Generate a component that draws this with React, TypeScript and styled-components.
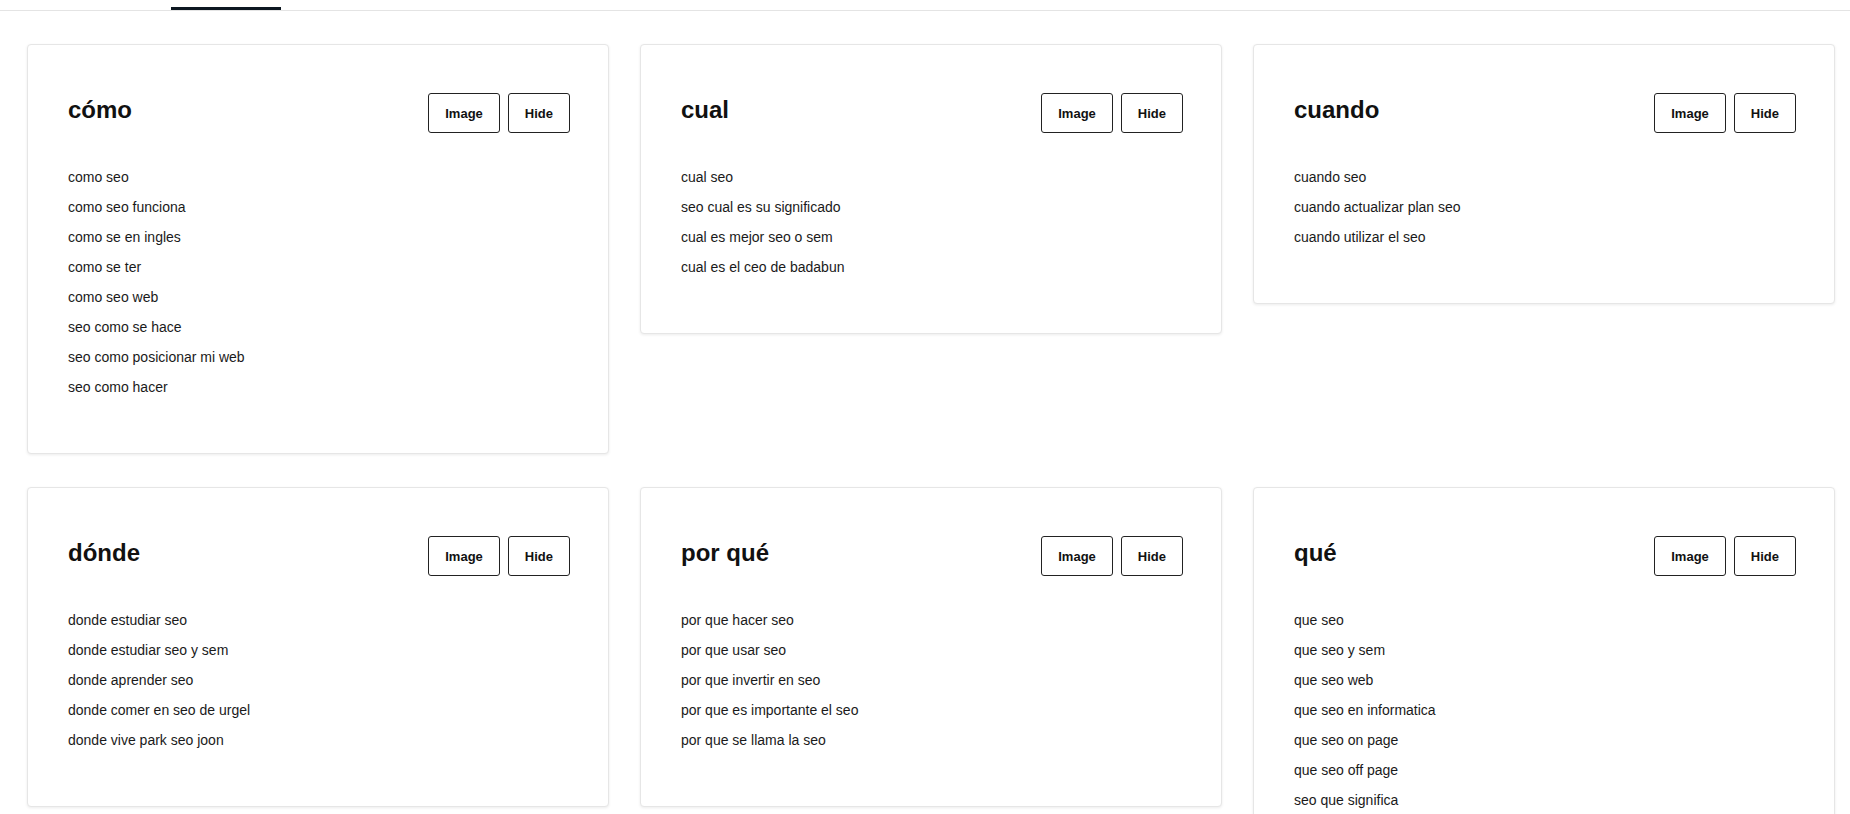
import styled, { createGlobalStyle } from "styled-components";

const GlobalStyle = createGlobalStyle`
  body {
    margin: 0;
    background: #ffffff;
    font-family: "Liberation Sans", Arial, sans-serif;
    color: #1a1a1a;
  }
`;

const Page = styled.main`
  min-height: 100vh;
  background: #ffffff;
`;

const TabBar = styled.nav`
  display: flex;
  height: 10px;
  padding-left: 27px;
  border-bottom: 1px solid #e4e4e4;
`;

const Tab = styled.div<{ $active?: boolean; $w: number }>`
  width: ${({ $w }) => $w}px;
  height: 100%;
  box-sizing: border-box;
  border-bottom: 3px solid
    ${({ $active }) => ($active ? "#0d1721" : "transparent")};
`;

const Grid = styled.section`
  display: grid;
  grid-template-columns: repeat(3, 1fr);
  column-gap: 31px;
  row-gap: 33px;
  align-items: start;
  padding: 33px 15px 40px 27px;
`;

const Card = styled.article`
  background: #ffffff;
  border: 1px solid #e6e6e6;
  border-radius: 4px;
  box-shadow: 0 1px 3px rgba(0, 0, 0, 0.08);
  padding: 48px 38px 51px 40px;
`;

const CardHeader = styled.header`
  display: flex;
  align-items: center;
  justify-content: space-between;
  height: 40px;
`;

const Title = styled.h2`
  margin: 0 0 6px;
  font-size: 24px;
  font-weight: 700;
  line-height: 1.2;
  color: #111111;
`;

const Actions = styled.div`
  display: flex;
  gap: 8px;
`;

const Button = styled.button`
  height: 40px;
  padding: 0 16px;
  background: #ffffff;
  border: 1px solid #222222;
  border-radius: 3px;
  font-family: "Liberation Sans", Arial, sans-serif;
  font-size: 13px;
  font-weight: 700;
  color: #111111;
  cursor: pointer;

  &:hover {
    background: #f4f4f4;
  }
`;

const List = styled.ul`
  list-style: none;
  margin: 29px 0 0;
  padding: 0;
`;

const Item = styled.li`
  font-size: 14px;
  line-height: 30px;
  color: #1a1a1a;
`;

type Group = { title: string; items: string[] };

const groups: Group[] = [
  {
    title: "cómo",
    items: [
      "como seo",
      "como seo funciona",
      "como se en ingles",
      "como se ter",
      "como seo web",
      "seo como se hace",
      "seo como posicionar mi web",
      "seo como hacer",
    ],
  },
  {
    title: "cual",
    items: [
      "cual seo",
      "seo cual es su significado",
      "cual es mejor seo o sem",
      "cual es el ceo de badabun",
    ],
  },
  {
    title: "cuando",
    items: ["cuando seo", "cuando actualizar plan seo", "cuando utilizar el seo"],
  },
  {
    title: "dónde",
    items: [
      "donde estudiar seo",
      "donde estudiar seo y sem",
      "donde aprender seo",
      "donde comer en seo de urgel",
      "donde vive park seo joon",
    ],
  },
  {
    title: "por qué",
    items: [
      "por que hacer seo",
      "por que usar seo",
      "por que invertir en seo",
      "por que es importante el seo",
      "por que se llama la seo",
    ],
  },
  {
    title: "qué",
    items: [
      "que seo",
      "que seo y sem",
      "que seo web",
      "que seo en informatica",
      "que seo on page",
      "que seo off page",
      "seo que significa",
    ],
  },
];

const App = () => {
  return (
    <Page>
      <GlobalStyle />
      <TabBar>
        <Tab $w={144} />
        <Tab $w={110} $active />
        <Tab $w={110} />
      </TabBar>
      <Grid>
        {groups.map((g) => (
          <Card key={g.title}>
            <CardHeader>
              <Title>{g.title}</Title>
              <Actions>
                <Button type="button">Image</Button>
                <Button type="button">Hide</Button>
              </Actions>
            </CardHeader>
            <List>
              {g.items.map((it) => (
                <Item key={it}>{it}</Item>
              ))}
            </List>
          </Card>
        ))}
      </Grid>
    </Page>
  );
};

export default App;
